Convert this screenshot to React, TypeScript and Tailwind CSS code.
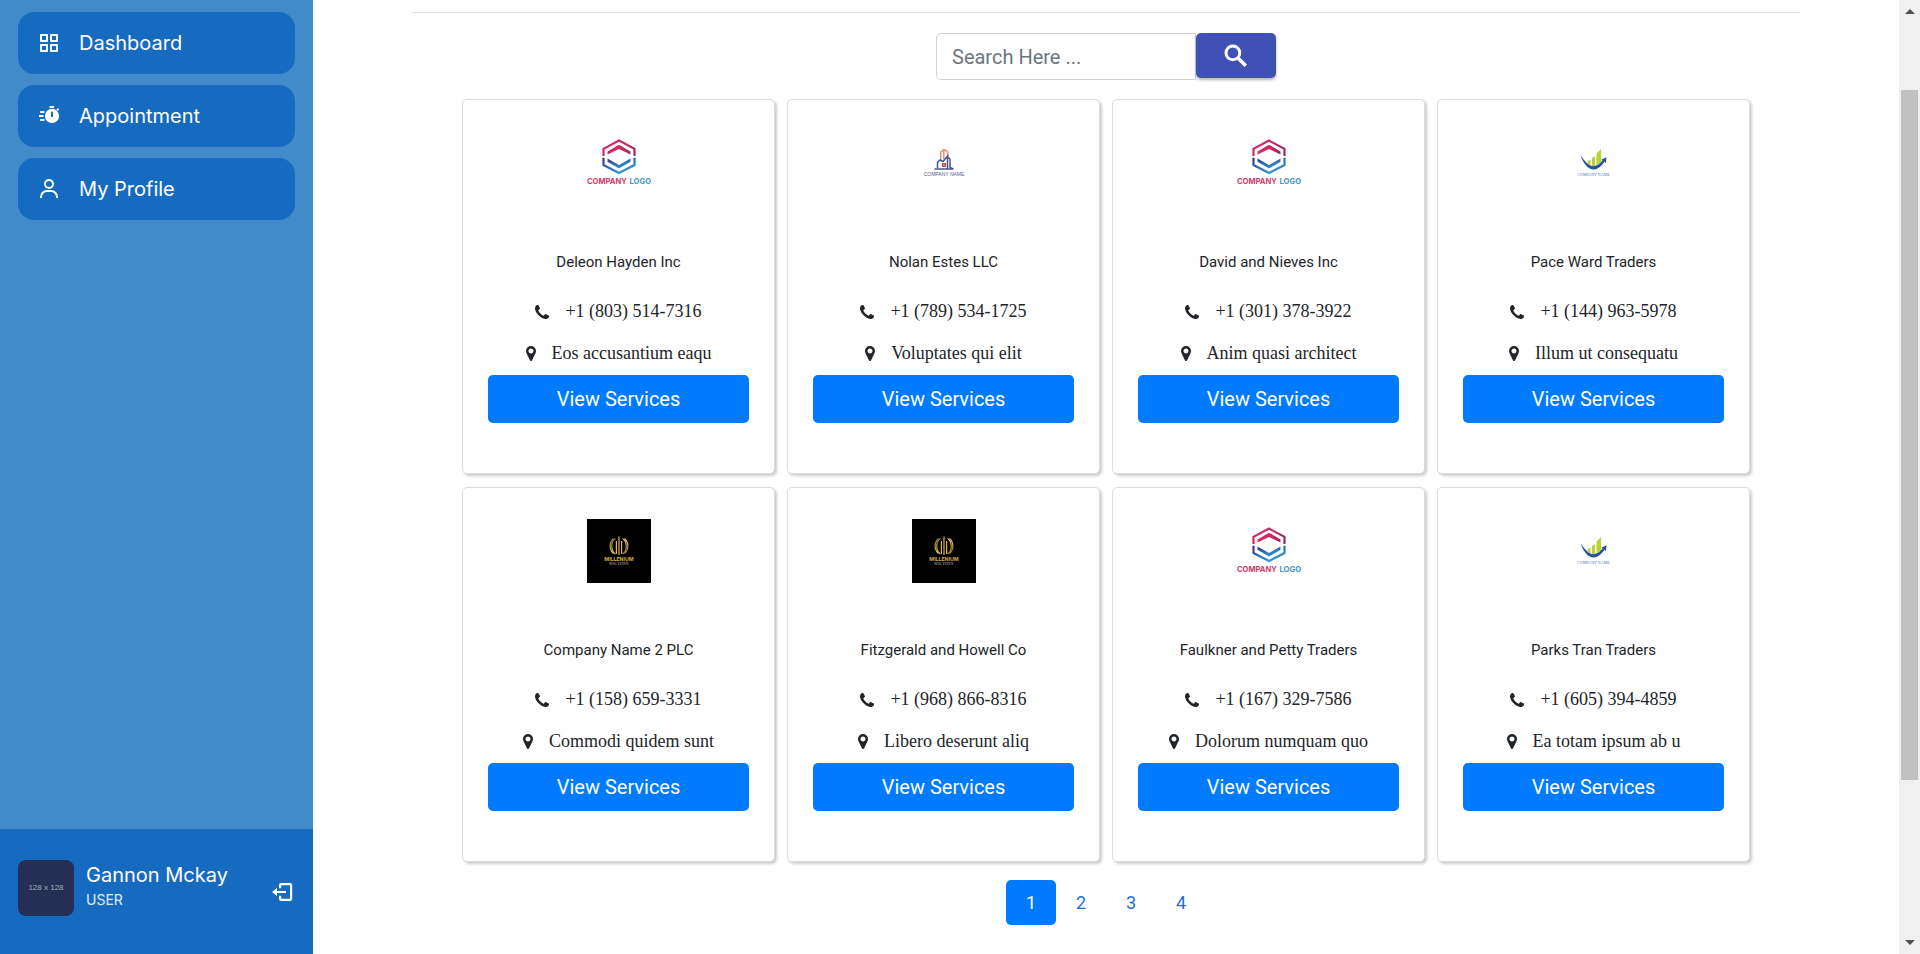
import React from "react";
import { BiGridAlt, BiUser } from "react-icons/bi";

type LogoKind = "hexagon" | "building" | "growth" | "millenium";

interface Company {
  name: string;
  phone: string;
  address: string;
  logo: LogoKind;
}

const companies: Company[] = [
  { name: "Deleon Hayden Inc", phone: "+1 (803) 514-7316", address: "Eos accusantium eaqu", logo: "hexagon" },
  { name: "Nolan Estes LLC", phone: "+1 (789) 534-1725", address: "Voluptates qui elit", logo: "building" },
  { name: "David and Nieves Inc", phone: "+1 (301) 378-3922", address: "Anim quasi architect", logo: "hexagon" },
  { name: "Pace Ward Traders", phone: "+1 (144) 963-5978", address: "Illum ut consequatu", logo: "growth" },
  { name: "Company Name 2 PLC", phone: "+1 (158) 659-3331", address: "Commodi quidem sunt", logo: "millenium" },
  { name: "Fitzgerald and Howell Co", phone: "+1 (968) 866-8316", address: "Libero deserunt aliq", logo: "millenium" },
  { name: "Faulkner and Petty Traders", phone: "+1 (167) 329-7586", address: "Dolorum numquam quo", logo: "hexagon" },
  { name: "Parks Tran Traders", phone: "+1 (605) 394-4859", address: "Ea totam ipsum ab u", logo: "growth" },
];

function SearchIcon() {
  return (
    <svg viewBox="0 0 24 24" className="size-[30px]" aria-hidden="true" fill="none" stroke="currentColor" strokeWidth="2.400">
      <circle cx="9.500" cy="9.500" r="5.500" />
      <path d="M13.800 13.800l6 6" strokeWidth="2.800" />
    </svg>
  );
}

function PhoneIcon() {
  return (
    <svg viewBox="0 128 1408 1408" className="size-[14px]" fill="currentColor" aria-hidden="true">
      <path d="M1408 1240q0 27-10 70.500t-21 68.500q-21 50-122 106-94 51-186 51-27 0-53-3.500t-57.500-12.500-47-14.500-55.500-20.500-49-18q-98-35-175-83-127-79-264-216t-216-264q-48-77-83-175-3-9-18-49t-20.500-55.500-14.500-47-12.500-57.500-3.500-53q0-92 51-186 56-101 106-122 25-11 68.500-21t70.500-10q14 0 21 3 18 6 53 76 11 19 30 54t35 63.500 31 53.500q3 4 17.500 25t21.500 35.500 7 28.500q0 20-28.500 50t-62 55-62 53-28.500 46q0 9 5 22.500t8.500 20.500 14 24 11.500 19q76 137 174 235t235 174q2 1 19 11.500t24 14 20.500 8.500 22.500 5q18 0 46-28.500t53-62 55-62 50-28.500q14 0 28.500 7t35.500 21.500 25 17.500q25 15 53.500 31t63.500 35 54 30q70 35 76 53 3 7 3 21z" />
    </svg>
  );
}

function PinIcon() {
  return (
    <svg viewBox="0 128 1024 1536" className="h-[15px] w-[10px]" fill="currentColor" aria-hidden="true">
      <path d="M768 640q0-106-75-181t-181-75-181 75-75 181 75 181 181 75 181-75 75-181zm256 0q0 109-33 179l-364 774q-16 33-47.500 52t-67.500 19-67.500-19-46.500-52l-365-774q-33-70-33-179 0-212 150-362t362-150 362 150 150 362z" />
    </svg>
  );
}

function StopwatchIcon() {
  return (
    <svg viewBox="0 0 24 24" className="size-6" fill="currentColor" aria-hidden="true">
      <path d="M12.5 2h4.600v2h-4.600z" />
      <path d="m19.200 5.800 1.600-1.700 1.400 1.400-1.700 1.600z" />
      <path
        fillRule="evenodd"
        d="M15 4.800a7.100 7.100 0 1 0 0 14.200 7.100 7.100 0 0 0 0-14.200zm-1 3h2v5.200h-2z"
      />
      <path d="M3.200 7h4.200v1.900H3.200zM2 11h4.600v1.900H2zM3.200 15h4.200v1.900H3.200z" />
    </svg>
  );
}

function ExitIcon() {
  return (
    <svg viewBox="0 0 24 24" className="size-6" fill="currentColor" aria-hidden="true">
      <path d="M1 12l5-4v3h9v2H6v3z" />
      <path d="M8 8.200V5c0-1.100.9-2 2-2h9.200c1.100 0 2 .9 2 2v14c0 1.100-.9 2-2 2H10c-1.100 0-2-.9-2-2v-3.200h2.200v3H19V5.200h-8.800v3z" />
    </svg>
  );
}

function HexagonLogo() {
  return (
    <svg viewBox="0 0 64 64" className="size-16" role="img" aria-label="Company Logo">
      <defs>
        <linearGradient id="hexTop" x1="0" x2="1" y1="0" y2="0">
          <stop offset="0" stopColor="#d02a60" />
          <stop offset="0.5" stopColor="#d3285f" />
          <stop offset="1" stopColor="#98295f" />
        </linearGradient>
        <linearGradient id="hexBottom" x1="0" x2="0.6" y1="0" y2="1">
          <stop offset="0" stopColor="#2f3585" />
          <stop offset="1" stopColor="#2f9bd6" />
        </linearGradient>
      </defs>
      <path fill="none" stroke="url(#hexTop)" strokeWidth="2.200" d="M16.500 25v-7.200L32 9.600l15.500 8.200V25" />
      <path fill="url(#hexTop)" d="M20.500 23.600v-3.200L32 13.800l11.500 6.600v3.200L32 18z" />
      <path fill="none" stroke="url(#hexBottom)" strokeWidth="2.200" d="M16.500 26.800V34L32 42l15.500-8v-7.200" />
      <path fill="url(#hexBottom)" d="M20.500 27.600v3.200L32 37.600l11.500-6.800v-3.200L32 34z" />
      <text x="0" y="53" fontSize="7.600" fontWeight="700" fill="#d23a68" className="font-['Inter',sans-serif]">
        COMPANY
      </text>
      <text x="64" y="53" fontSize="7.600" fontWeight="700" fill="#3a97d3" textAnchor="end" className="font-['Inter',sans-serif]">
        LOGO
      </text>
    </svg>
  );
}

function BuildingLogo() {
  return (
    <svg viewBox="0 0 64 64" className="size-16" role="img" aria-label="Company Name">
      <g fill="none" strokeWidth="1.500">
        <path stroke="#f08c74" d="M28.800 28.500V21l3.200-2.600 3.800 2.600v7M31.800 19v9" />
        <path stroke="#4a5684" d="M22.500 38h18.500M25.500 37v-5.500l2.500-2.500 3 1.500 4.500-5.500v12.500M35.500 26l2.500 2v8.500l3.500 1.500" />
        <path stroke="#cc4a4a" d="M30.700 32.700h2.600v2.600h-2.600z" />
      </g>
      <text x="32" y="45" fontSize="5" fill="#59618a" textAnchor="middle" className="font-['Liberation_Sans',sans-serif]">
        COMPANY NAME
      </text>
    </svg>
  );
}

function GrowthLogo() {
  return (
    <svg viewBox="0 0 64 64" className="size-16" role="img" aria-label="Company Name">
      <path fill="#b9d236" d="M25.500 30l3-1.300v5.800l-3-2zM30 27l3-1.700v10.200l-3-.6zM34.500 22.500l4.500-4.500v13.500l-4.500 3z" />
      <path fill="#2a5298" d="M18.500 24c4 6 7.500 10.500 12.500 11.300 4.500-.3 7.700-3.300 9.700-6l-1.500-.5 5.300-2.600-.6 5.800-1.400-1.200c-2.700 4-6.200 7.400-10.700 7.700C25.500 38.500 21 31.500 18.500 24z" />
      <text x="31.500" y="45" fontSize="4" fill="#4f78b0" textAnchor="middle" className="font-['Liberation_Serif',serif]">
        COMPANY NAME
      </text>
    </svg>
  );
}

function MilleniumLogo() {
  return (
    <svg viewBox="0 0 64 64" className="size-16" role="img" aria-label="Millenium">
      <defs>
        <linearGradient id="gold" x1="0" x2="1" y1="0" y2="1">
          <stop offset="0" stopColor="#8f6d25" />
          <stop offset="0.5" stopColor="#e8c864" />
          <stop offset="1" stopColor="#9c7426" />
        </linearGradient>
      </defs>
      <rect width="64" height="64" fill="#000" />
      <g fill="none" stroke="url(#gold)" strokeWidth="1.200">
        <path d="M28.500 19.500c-5 3-5 12.500 0 15.500M35.500 19.500c5 3 5 12.500 0 15.500" />
        <path d="M26.500 19.500c-4.500 4-4.500 11 0 15M37.500 19.500c4.500 4 4.500 11 0 15" />
      </g>
      <path fill="#dcb552" d="M28.800 22h1.200v13h-1.200zM31.400 17.500h1.200V36h-1.200zM34 22h1.200v13H34z" />
      <text x="32" y="42" fontSize="5.200" fontWeight="700" fill="#d3ab4a" textAnchor="middle" className="font-['Inter',sans-serif]">
        MILLENIUM
      </text>
      <text x="32" y="45.500" fontSize="3" fill="#c9c0a6" textAnchor="middle" className="font-['Inter',sans-serif]">
        REAL ESTATE
      </text>
    </svg>
  );
}

const logos: Record<LogoKind, () => React.JSX.Element> = {
  hexagon: HexagonLogo,
  building: BuildingLogo,
  growth: GrowthLogo,
  millenium: MilleniumLogo,
};

const navItems = [
  { label: "Dashboard", icon: <BiGridAlt className="size-6" /> },
  { label: "Appointment", icon: <StopwatchIcon /> },
  { label: "My Profile", icon: <BiUser className="size-6" /> },
];

function Sidebar() {
  return (
    <aside className="flex w-[313px] shrink-0 flex-col justify-between bg-[#428bca] font-['Inter',sans-serif] text-white">
      <nav className="flex flex-col gap-[11px] px-[18px] pt-3">
        {navItems.map((item) => (
          <a
            key={item.label}
            href="#"
            className="flex h-[62px] items-center gap-[18px] rounded-2xl bg-[#166bc1] px-[19px] text-xl"
          >
            {item.icon}
            {item.label}
          </a>
        ))}
      </nav>
      <div className="flex h-[125px] items-center gap-3 bg-[#166bc1] px-[18px] pb-2">
        <div className="flex size-14 shrink-0 items-center justify-center rounded-lg bg-[#252f56] font-['Liberation_Sans',sans-serif] text-[8px] text-[#a5abc0]">
          128 x 128
        </div>
        <div className="flex-1 pb-1">
          <p className="text-xl leading-7">Gannon Mckay</p>
          <p className="text-sm leading-[22px] text-[#e4ecf7]">USER</p>
        </div>
        <button type="button" aria-label="Log out" className="mt-2">
          <ExitIcon />
        </button>
      </div>
    </aside>
  );
}

function CompanyCard({ company }: { company: Company }) {
  const Logo = logos[company.logo];
  return (
    <article className="flex h-[375px] flex-col items-center rounded-[5px] border border-[#dcdcdc] bg-white px-[25px] pt-[31px] shadow-[2px_2px_3px_rgba(0,0,0,0.2)]">
      <Logo />
      <h2 className="mt-[55px] text-[15px] leading-6">{company.name}</h2>
      <p className="mt-6 flex items-center gap-4 font-['Liberation_Serif',serif] text-lg leading-[27px]">
        <PhoneIcon />
        {company.phone}
      </p>
      <p className="mt-[15px] flex items-center gap-4 font-['Liberation_Serif',serif] text-lg leading-[27px]">
        <PinIcon />
        {company.address}
      </p>
      <button type="button" className="mt-2 h-12 w-full rounded-[5px] bg-[#007bff] text-xl text-white">
        View Services
      </button>
    </article>
  );
}

function ScrollTrack() {
  return (
    <div className="flex w-[21px] shrink-0 flex-col items-center bg-[#f0f0f0] pt-[9px] pb-[9px]" aria-hidden="true">
      <svg viewBox="0 0 10 5" className="h-[5px] w-[10px]" fill="#505050">
        <path d="M5 0l5 5H0z" />
      </svg>
      <div className="mt-[76px] h-[690px] w-[17px] bg-[#c1c1c1]" />
      <svg viewBox="0 0 10 5" className="mt-auto h-[5px] w-[10px]" fill="#505050">
        <path d="M0 0h10L5 5z" />
      </svg>
    </div>
  );
}

export default function App() {
  return (
    <div className="flex min-h-screen bg-white font-['Roboto',sans-serif] text-[#212529]">
      <Sidebar />
      <main className="flex-1 px-[99px] pt-3">
        <hr className="border-[#e0e0e0]" />
        <form className="mt-5 flex items-start justify-center" onSubmit={(e) => e.preventDefault()}>
          <input
            type="text"
            aria-label="Search"
            placeholder="Search Here ..."
            className="h-[47px] w-[260px] rounded-l-[5px] border border-[#ced4da] px-[15px] text-xl placeholder:text-[#6c757d]"
          />
          <button
            type="submit"
            aria-label="Submit search"
            className="flex h-[45px] w-20 items-center justify-center rounded-[5px] bg-[#3f51b5] text-white shadow-[0_2px_3px_rgba(0,0,0,0.3)]"
          >
            <SearchIcon />
          </button>
        </form>
        <section className="mt-[19px] grid grid-cols-4 gap-x-3 gap-y-[13px] px-[50px]">
          {companies.map((company) => (
            <CompanyCard key={company.name} company={company} />
          ))}
        </section>
        <nav aria-label="Pages" className="mt-[18px] flex justify-center text-lg text-[#1a6fdc]">
          <a href="#" aria-current="page" className="flex h-[45px] w-[50px] items-center justify-center rounded-[5px] bg-[#007bff] text-white">
            1
          </a>
          {[2, 3, 4].map((page) => (
            <a key={page} href="#" className="flex h-[45px] w-[50px] items-center justify-center">
              {page}
            </a>
          ))}
        </nav>
      </main>
      <ScrollTrack />
    </div>
  );
}
